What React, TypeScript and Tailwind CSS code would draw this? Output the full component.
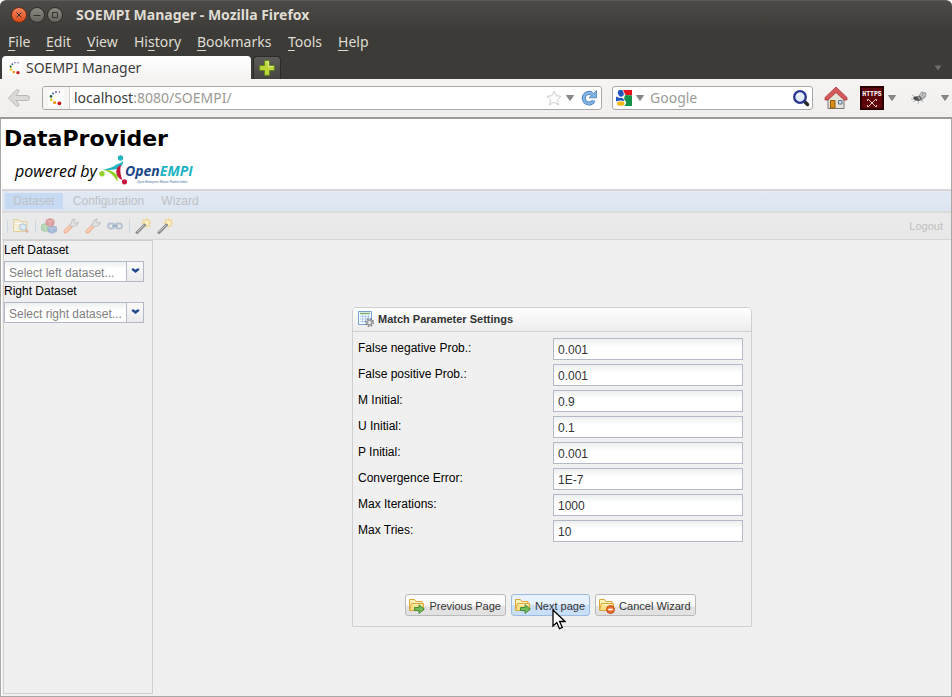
import { useId, useState } from "react";
import type { ReactNode } from "react";

const UI = "font-['Noto_Sans','Open_Sans',sans-serif]";

function Dots({ className }: { className?: string }) {
  return (
    <svg viewBox="0 0 16 16" className={className} aria-hidden="true">
      <rect width="16" height="16" fill="#fff" />
      <circle cx="11.5" cy="2" r=".8" fill="#7b3fa0" />
      <circle cx="8" cy="2" r=".9" fill="#5a4fa8" />
      <circle cx="5" cy="3.6" r="1" fill="#3458a8" />
      <circle cx="3" cy="6.4" r="1.3" fill="#26603a" />
      <circle cx="3.4" cy="9.8" r="1.4" fill="#e9c51c" />
      <circle cx="6.6" cy="12.6" r="1.6" fill="#e8921a" />
      <circle cx="11.4" cy="13.3" r="1.9" fill="#cc1518" />
    </svg>
  );
}

function Caret() {
  return (
    <svg viewBox="0 0 8 6" className="h-[6px] w-[8px] shrink-0" aria-hidden="true">
      <path d="M.5 .5h7L4 5.5z" fill="#8b8a87" stroke="#6d6c69" strokeWidth=".7" />
    </svg>
  );
}

function WindowButton({ label, close, children }: { label: string; close?: boolean; children: ReactNode }) {
  return (
    <button
      aria-label={label}
      className={
        close
          ? "h-4 w-4 rounded-full border border-[#6b2c14] bg-linear-to-b from-[#f4855a] to-[#dd4814]"
          : "h-4 w-4 rounded-full border border-[#2f2e2a] bg-linear-to-b from-[#8a8880] to-[#66645d]"
      }
    >
      <svg viewBox="0 0 14 14" className="h-[14px] w-[14px]" fill="none" stroke="#35322c" strokeWidth="1">
        {children}
      </svg>
    </button>
  );
}

function TitleBar() {
  return (
    <header className="flex h-[29px] items-center gap-[13px] rounded-t-md border-t border-[#5b5a56] bg-linear-to-b from-[#4b4a46] to-[#3d3c38] pl-[11px]">
      <div className="flex gap-[2px]">
        <WindowButton label="Close" close>
          <path d="M4.5 4.5l5 5M9.5 4.5l-5 5" />
        </WindowButton>
        <WindowButton label="Minimize">
          <path d="M3.5 7.500h7" />
        </WindowButton>
        <WindowButton label="Maximize">
          <path d="M4.500 4.500h5v5h-5z" />
        </WindowButton>
      </div>
      <h1 className="text-[14px] leading-5 font-bold text-[#dfdbd2]">SOEMPI Manager - Mozilla Firefox</h1>
    </header>
  );
}

const menus = [
  { name: "File", width: "w-[38px]" },
  { name: "Edit", width: "w-[41px]" },
  { name: "View", width: "w-[47px]" },
  { name: "History", width: "w-[63px]" },
  { name: "Bookmarks", width: "w-[91px]" },
  { name: "Tools", width: "w-[50px]" },
  { name: "Help", width: "w-[45px]" },
];

function MenuBar() {
  return (
    <nav className="flex h-[26px] items-center bg-[#3c3b37] pl-[8px]">
      {menus.map(({ name, width }) => {
        const at = name === "History" ? 2 : 0;
        return (
          <button key={name} className={"text-left text-[14px] leading-5 whitespace-nowrap text-[#dfdbd2] " + width}>
            {name.slice(0, at)}
            <span className="underline underline-offset-[3px]">{name[at]}</span>
            {name.slice(at + 1)}
          </button>
        );
      })}
    </nav>
  );
}

function TabStrip() {
  return (
    <div className="flex h-6 items-end bg-[#3c3b37] pl-[2px]">
      <button className="flex h-[23px] w-[249px] items-center gap-[4px] rounded-t-[4px] bg-linear-to-b from-white to-[#f4f3f2] pl-[6px] text-[14px] leading-5 text-[#3c3c3c]">
        <Dots className="h-[14px] w-[14px]" />
        SOEMPI Manager
      </button>
      <button aria-label="New tab" className="ml-[2px] flex h-[23px] w-[28px] items-center justify-center rounded-t-[4px] border border-b-0 border-[#2b2a27] bg-linear-to-b from-[#5d5c58] to-[#454440]">
        <svg viewBox="0 0 16 16" className="h-4 w-4">
          <path d="M5.5 .7h5v4.8h4.8v5h-4.8v4.8h-5v-4.8H.7v-5h4.8z" fill="#bed63a" stroke="#5f8a1b" />
          <path d="M6.5 1.8h3v4.7h4.7" fill="none" stroke="#e3ef93" />
        </svg>
      </button>
      <button aria-label="List all tabs" className="mr-[10px] mb-2 ml-auto flex">
        <svg viewBox="0 0 8 6" className="h-[6px] w-[8px]">
          <path d="M.5 .5h7L4 5.5z" fill="#6e6d69" />
        </svg>
      </button>
    </div>
  );
}

function NavBar() {
  const [url, setUrl] = useState("localhost:8080/SOEMPI/");
  const split = url.indexOf(":");
  return (
    <div className="flex h-10 items-center border-b-2 border-[#9c9a96] bg-linear-to-b from-[#f5f4f3] to-[#f0efee] pr-[3px] pl-[7px]">
      <button aria-label="Back" className="shrink-0">
        <svg viewBox="0 0 24 20" className="h-5 w-6">
          <path d="M1.500 10L9 2.300q1.500-1.300 2.500-.3t0 2.300L9 7.500h11q2.500 0 2.500 2.500T20 12.500H9l2.500 3.200q1 1.300 0 2.300T9 17.700z" fill="#dcdad8" stroke="#bbb9b6" />
        </svg>
      </button>
      <div className="ml-[11px] flex h-6 min-w-0 flex-1 items-center overflow-hidden rounded-[3px] border border-[#a9a7a3] bg-white">
        <span className="flex h-full w-[27px] shrink-0 items-center justify-center border-r border-[#d4d2cf] bg-[#f6f5f4]">
          <Dots className="h-4 w-4" />
        </span>
        <div className="relative ml-1 h-5 min-w-0 flex-1 text-[14px] leading-5">
          <div aria-hidden="true" className="absolute inset-0 whitespace-nowrap text-[#9b9994]">
            <span className="text-[#3c3c3c]">{split < 0 ? url : url.slice(0, split)}</span>
            {split < 0 ? "" : url.slice(split)}
          </div>
          <input
            aria-label="Address"
            value={url}
            onChange={(e) => setUrl(e.target.value)}
            className="relative block h-5 w-full bg-transparent text-transparent caret-black outline-none"
          />
        </div>
        <svg viewBox="0 0 16 16" className="h-4 w-4 shrink-0">
          <path d="M8 1l2.100 4.700 5 .6-3.700 3.500 1 5L8 12.300l-4.400 2.500 1-5L.9 6.300l5-.6z" fill="#fdfdfd" stroke="#c9c7c5" strokeWidth=".9" />
        </svg>
        <span className="ml-1 flex">
          <Caret />
        </span>
        <button aria-label="Reload" className="mr-1 ml-[7px] shrink-0">
          <svg viewBox="0 0 16 16" className="h-4 w-4" fill="none">
            <path d="M12.800 10.500A5.300 5.300 0 1 1 11 3.800" stroke="#4a7db5" strokeWidth="4" />
            <path d="M15.500 .5v7.300H8z" fill="#7fb0e2" stroke="#4a7db5" strokeWidth=".8" />
            <path d="M12.800 10.500A5.300 5.300 0 1 1 11.800 4.500" stroke="#82b2e4" strokeWidth="2.700" />
          </svg>
        </button>
      </div>
      <div className="ml-[10px] flex h-6 w-[201px] shrink-0 items-center rounded-[3px] border border-[#a9a7a3] bg-white pr-[2px] pl-[3px]">
        <svg viewBox="0 0 16 16" className="h-4 w-4 shrink-0">
          <rect width="16" height="16" fill="#fff" />
          <path d="M7 0h9v5.500L9.500 5z" fill="#e5131c" />
          <path d="M9.500 5l6.500.5V16H8.500q3-3.500.5-5.500-2-2.500.5-5.500z" fill="#14924a" />
          <ellipse cx="4.800" cy="3.200" rx="2.800" ry="3.600" transform="rotate(-20 4.800 3.200)" fill="#2456c0" />
          <path d="M0 6.500q3 1.500 6.500 1.500 2 1.500 1.500 3-4-1-8 .5z" fill="#2456c0" />
          <ellipse cx="4.700" cy="13.500" rx="3.800" ry="2.300" fill="#f5b916" />
        </svg>
        <span className="mx-1 flex">
          <Caret />
        </span>
        <input aria-label="Search" placeholder="Google" className="ml-[2px] h-5 min-w-0 flex-1 bg-transparent text-[14px] leading-5 outline-none placeholder:text-[#9d9b98]" />
        <svg viewBox="0 0 18 18" className="h-[18px] w-[18px] shrink-0" fill="none">
          <path d="M12.500 12.500l3 3" stroke="#2a2a2a" strokeWidth="3.500" strokeLinecap="round" />
          <circle cx="8" cy="8" r="5.800" fill="#e3ebf8" stroke="#29368f" strokeWidth="2.300" />
          <path d="M5 7q1-2 3-2" stroke="#fff" strokeWidth="1.500" />
        </svg>
      </div>
      <button aria-label="Home" className="ml-[11px] shrink-0">
        <svg viewBox="0 0 24 24" className="h-6 w-6">
          <path d="M4 12l8-8 8 8v10.500H4z" fill="#e6e4d8" stroke="#77756f" />
          <path d="M6.500 14.500H11V22H6.500z" fill="#d98f1c" stroke="#8f5a0a" />
          <path d="M14.500 14.500h3.500v3.500h-3.500z" fill="#d2e2f0" stroke="#55718d" />
          <path d="M12 1L1 11.500V14h3l8-7.500 8 7.500h3v-2.500z" fill="#d5585a" stroke="#a8383b" strokeWidth=".8" />
        </svg>
      </button>
      <button aria-label="HTTPS" className="ml-[12px] flex shrink-0 items-center gap-1">
        <svg viewBox="0 0 24 24" className="h-6 w-6">
          <rect width="24" height="24" fill="#5c0408" />
          <rect x="1" y="1" width="22" height="22" fill="none" stroke="#2c0002" strokeWidth="2" />
          <text x="12" y="9.500" fontSize="6.500" fontWeight="700" textAnchor="middle" fill="#fff" fontFamily="Liberation Mono, monospace">HTTPS</text>
          <path d="M8.500 13.500l7 7M15.500 13.500l-7 7M7.500 15v-1.500H9M15 13.500h1.500V15M16.500 19v1.500H15M9 20.500H7.500V19" stroke="#e8c9cb" fill="none" />
        </svg>
        <Caret />
      </button>
      <button aria-label="Firebug" className="ml-[14px] flex shrink-0 items-center gap-[13px]">
        <svg viewBox="0 0 18 16" className="h-4 w-[18px]" fill="none">
          <path d="M2 5l4 3M3 12l4-3M8 14l1-4M1 9h4M13 12l-2-3" stroke="#b5b5b5" />
          <path d="M8 7l3.500-5 4.500 1-.5 4-4.500 3.500z" fill="#a9a9a9" stroke="#898989" strokeWidth=".6" />
          <path d="M9 8l3-5M10 9l5-5" stroke="#eee" strokeWidth=".7" />
          <ellipse cx="8" cy="8.500" rx="3.500" ry="2.500" fill="#5c5c5c" />
          <circle cx="5" cy="8" r="1.600" fill="#444" />
          <path d="M8 6.500l2 3" stroke="#ccc" />
        </svg>
        <Caret />
      </button>
    </div>
  );
}

function OpenEmpiLogo() {
  return (
    <svg viewBox="0 0 94 30" className="h-[30px] w-[94px]" role="img" aria-label="OpenEMPI">
      <circle cx="21.500" cy="3" r="2.700" fill="#22b4c0" />
      <path d="M24.300 6Q23.500 17 3 14.500 13 13.500 17.500 9.500 21.500 8.500 24.300 6z" fill="#22b4c0" />
      <circle cx="3" cy="18.800" r="2.700" fill="#93d22d" />
      <path d="M4 14.800q9-.8 14.500 5.700v6.300Q13 17 4 14.800z" fill="#93d22d" />
      <circle cx="25.500" cy="26.800" r="2.600" fill="#c3183c" />
      <path d="M22 9.500q-2 8 1.500 15.500-6-2-6.300-8.500.3-4.500 4.800-7z" fill="#c3183c" />
      <text x="26" y="21" fontFamily="Open Sans, sans-serif" fontSize="14" fontWeight="700" fontStyle="italic" fill="#1b4686">
        Open<tspan fill="#20b4c2">EMPI</tspan>
      </text>
      <text x="38" y="28" fontFamily="Liberation Sans, sans-serif" fontSize="3" fill="#3a6c9c">Open Enterprise Master Patient Index</text>
    </svg>
  );
}

function PageHeader() {
  return (
    <div className="h-[70px] bg-white pl-[2px]">
      <h2 className="pt-[6px] font-['DejaVu_Sans',sans-serif] text-[22px] leading-7 font-bold text-black">DataProvider</h2>
      <div className="flex items-end pt-[2px] pl-[11px] font-['Open_Sans',sans-serif] text-[16px] leading-7 text-black italic">
        <span className="mr-[2px]">powered by</span>
        <OpenEmpiLogo />
      </div>
    </div>
  );
}

function AppMenu() {
  return (
    <nav className="flex h-6 items-center border-t-2 border-b-2 border-t-[#d6d6d6] border-b-[#dcdcdc] bg-linear-to-b from-[#e2e9f3] to-[#dbe5f1] pl-[3px] font-['Liberation_Sans',Arial,sans-serif] text-[12px] leading-4 text-[#c0c1c4]">
      <button className="h-4 w-[58px] bg-[#c6dbf3]">Dataset</button>
      <button className="ml-[8px] w-[75px]">Configuration</button>
      <button className="ml-[15px] w-[38px]">Wizard</button>
    </nav>
  );
}

function Wrench() {
  return (
    <svg viewBox="0 0 16 16" className="h-4 w-4" fill="none">
      <path d="M2.500 13.500l6-6" stroke="#f0b193" strokeWidth="4" strokeLinecap="round" />
      <path d="M2.500 13.300l5.500-5.500" stroke="#f8d0bc" strokeWidth="2" strokeLinecap="round" />
      <path d="M8 5.500Q8 1.500 12 .8L10.800 3.500l1.700 1.700 2.700-1.200q0 4-4.700 4.200L9 9 6.500 7z" fill="#e1e1e1" stroke="#b9bcc0" strokeWidth=".9" />
    </svg>
  );
}

function Wand() {
  return (
    <svg viewBox="0 0 16 16" className="h-4 w-4" fill="none">
      <path d="M11.500 0v10M6.500 5H16M8 1.500l7 7M15 1.500l-7 7" stroke="#f1d58a" strokeWidth="1.600" />
      <circle cx="11.500" cy="5" r="2.200" fill="#fff3c4" />
      <path d="M2 14.500l7.500-7.500" stroke="#8e8e8e" strokeWidth="3" strokeLinecap="round" />
      <path d="M2 14l7-7" stroke="#cacaca" />
    </svg>
  );
}

function Divider() {
  return <span className="h-[13px] w-px bg-[#ccd8e6]" />;
}

function AppToolbar() {
  return (
    <div className="flex h-[27px] items-center border-b border-[#d5d5d5] bg-linear-to-b from-[#eaeaea] to-[#e8e8e8] pr-[8px] pl-[5px]">
      <Divider />
      <button aria-label="Browse datasets" className="ml-[5px] opacity-80">
        <svg viewBox="0 0 16 16" className="h-4 w-4" fill="none">
          <path d="M.5 1.500h5l1.500 2h7v10H.5z" fill="#f6ecca" stroke="#e1cb8f" />
          <path d="M2 5.500h11M3 7.500v5" stroke="#fff" />
          <circle cx="10" cy="9" r="3.200" fill="#dcecf8" stroke="#a9c3dc" strokeWidth="1.200" />
          <path d="M12.500 11.500l2.500 3" stroke="#dca685" strokeWidth="2" />
        </svg>
      </button>
      <span className="ml-[6px] flex">
        <Divider />
      </span>
      <div className="ml-[5px] flex gap-[6px]">
        <button aria-label="Blocking" className="opacity-80">
          <svg viewBox="0 0 16 16" className="h-4 w-4" strokeWidth=".6">
            <path d="M.5 7L3.500 5.500 8 7v5l-4 2-3.500-2z" fill="#a2cda2" stroke="#86b888" />
            <path d="M.5 7L4 8.500 8 7M4 8.500V14" fill="none" stroke="#d5ead5" />
            <path d="M7 9l4-1.500 4.500 1.500v4.500L11 15.500l-4-2z" fill="#93aed2" stroke="#7c99c2" />
            <path d="M7 9l4 2 4.500-2M11 11v4.500" fill="none" stroke="#cbdaec" />
            <path d="M5 2l4-1.500L13 2v4.500L9 8.500l-4-2z" fill="#e08c8c" stroke="#cb7676" />
            <path d="M5 2l4 1.500L13 2M9 3.500v5" fill="none" stroke="#f2c8c8" />
          </svg>
        </button>
        <button aria-label="Matching settings">
          <Wrench />
        </button>
        <button aria-label="Field settings">
          <Wrench />
        </button>
        <button aria-label="Link records">
          <svg viewBox="0 0 16 16" className="h-4 w-4" fill="none" strokeWidth="1.800">
            <rect x="1" y="5.500" width="6.500" height="5" rx="2.500" stroke="#b7c2d2" />
            <rect x="8.500" y="5.500" width="6.500" height="5" rx="2.500" stroke="#b7c2d2" />
            <path d="M5 8h6" stroke="#a3b2c6" />
          </svg>
        </button>
      </div>
      <span className="ml-[6px] flex">
        <Divider />
      </span>
      <div className="ml-[5px] flex gap-[6px]">
        <button aria-label="Wizard">
          <Wand />
        </button>
        <button aria-label="Matching wizard">
          <Wand />
        </button>
      </div>
      <button className="ml-auto font-['Liberation_Sans',Arial,sans-serif] text-[11px] leading-4 text-[#bfbfc1]">Logout</button>
    </div>
  );
}

function DatasetSelect({ label, hint }: { label: string; hint: string }) {
  const id = useId();
  return (
    <div>
      <label htmlFor={id} className="block h-5 text-[12px] leading-[18px] text-black">
        {label}
      </label>
      <div className="relative h-[21px] w-[140px]">
        <select id={id} className="block h-full w-full appearance-none border border-[#b5b8c8] bg-white bg-linear-to-b from-[#edf1f0] to-white to-40% pt-[2px] pl-[4px] text-[12px] leading-4 text-[#808080] outline-none">
          <option>{hint}</option>
        </select>
        <span className="pointer-events-none absolute inset-y-px right-px flex w-[17px] justify-center border-l border-[#b5b8c8] bg-linear-to-b from-[#fafafa] to-[#ebebeb] pt-[6px]">
          <svg viewBox="0 0 10 6" className="h-[5px] w-[9px]">
            <path d="M.5 .5h2.500L5 2.200 7 .5h2.500v1.800L5 6 .5 2.300z" fill="#24488f" />
          </svg>
        </span>
      </div>
    </div>
  );
}

function Sidebar() {
  return (
    <aside className="w-[150px] shrink-0 border border-[#d0d0d0]">
      <div className="flex flex-col">
        <DatasetSelect label="Left Dataset" hint="Select left dataset..." />
        <DatasetSelect label="Right Dataset" hint="Select right dataset..." />
      </div>
    </aside>
  );
}

function Field({ label, initial }: { label: string; initial: string }) {
  const id = useId();
  return (
    <div className="flex h-[22px] items-start">
      <label htmlFor={id} className="w-[195px] pt-[2px] text-[12px] leading-4 text-black">
        {label}
      </label>
      <input
        id={id}
        defaultValue={initial}
        className="h-[22px] min-w-0 flex-1 border border-[#b5b8c8] bg-white bg-linear-to-b from-[#ecf0ef] to-white to-40% px-1 pt-[2px] text-[12px] leading-4 text-[#333] outline-none"
      />
    </div>
  );
}

function FolderIcon({ cancel }: { cancel?: boolean }) {
  return (
    <svg viewBox="0 0 16 16" className="h-4 w-4 shrink-0">
      <path d="M.5 12V1.500h5l1.500 2h6V6" fill="#fdf1b6" stroke="#d9a63c" />
      <path d="M.5 12.500L2.500 5.500h12v7z" fill="#f9df83" stroke="#d9a63c" />
      <path d="M3.500 6.800h9.500" stroke="#fff6cf" />
      {cancel ? (
        <>
          <circle cx="11.500" cy="11.500" r="4" fill="#e66b28" stroke="#b84711" strokeWidth=".8" />
          <path d="M9.200 11.500h4.600" stroke="#fff" strokeWidth="1.600" />
        </>
      ) : (
        <path d="M5.500 9.500h4.500V6.700l5.300 4.400L10 15.500v-2.900H5.500z" fill="#72bd58" stroke="#3a8433" strokeWidth=".9" />
      )}
    </svg>
  );
}

function WizardButton({ children, cancel, active }: { children: ReactNode; cancel?: boolean; active?: boolean }) {
  return (
    <button
      className={
        "flex h-[22px] items-center gap-[4px] rounded-[3px] border pt-[2px] pr-[4px] pl-[3px] text-[11px] leading-4 whitespace-nowrap text-[#333] " +
        (active
          ? "border-[#9ebae1] bg-linear-to-b from-[#e6f2ff] from-50% to-[#c9dff8] to-50%"
          : "border-[#b9b9b9] bg-linear-to-b from-[#fcfcfc] from-50% to-[#e2e2e2] to-60%")
      }
    >
      <FolderIcon cancel={cancel} />
      {children}
    </button>
  );
}

const fields = [
  ["False negative Prob.:", "0.001"],
  ["False positive Prob.:", "0.001"],
  ["M Initial:", "0.9"],
  ["U Initial:", "0.1"],
  ["P Initial:", "0.001"],
  ["Convergence Error:", "1E-7"],
  ["Max Iterations:", "1000"],
  ["Max Tries:", "10"],
];

function SettingsPanel() {
  return (
    <section className="flex h-80 w-[400px] flex-col rounded-t-[5px] border border-[#d0d0d0]">
      <h3 className="flex h-6 shrink-0 items-center gap-1 rounded-t-[4px] border-b border-[#d0d0d0] bg-linear-to-b from-white to-[#ececec] pb-px pl-[5px] text-[11px] leading-4 font-bold text-[#333]">
        <svg viewBox="0 0 16 16" className="h-4 w-4" fill="none">
          <path d="M.5 .5h13v13H.5z" fill="#f5faff" stroke="#77a1d3" />
          <path d="M2 2.500h10" stroke="#78b36c" strokeWidth="1.500" />
          <path d="M2 5.500h10M2 8h10M2 10.500h10M4.500 4v8M7.500 4v8M10.500 4v8" stroke="#a9c6e8" strokeWidth=".8" />
          <circle cx="11.500" cy="11.500" r="3.700" stroke="#7b7f85" strokeWidth="1.800" strokeDasharray="1.500 1.400" />
          <circle cx="11.500" cy="11.500" r="2.300" fill="#eee" stroke="#9b9ea3" strokeWidth="1.600" />
        </svg>
        Match Parameter Settings
      </h3>
      <form className="flex flex-1 flex-col justify-between pt-[6px] pr-[8px] pb-[10px] pl-[5px]" onSubmit={(e) => e.preventDefault()}>
        <div className="flex flex-col gap-1">
          {fields.map(([label, value]) => (
            <Field key={label} label={label} initial={value} />
          ))}
        </div>
        <div className="flex justify-center gap-[5px]">
          <WizardButton>Previous Page</WizardButton>
          <div className="relative">
            <WizardButton active>Next page</WizardButton>
            <svg viewBox="0 0 14 21" className="pointer-events-none absolute top-[15px] left-[41px] h-[21px] w-[14px]" aria-hidden="true">
              <path d="M1 1v16l3.800-3.500 2.700 6.200 2.800-1.200-2.700-6H13z" fill="#fff" stroke="#000" strokeWidth="1.300" />
            </svg>
          </div>
          <WizardButton cancel>Cancel Wizard</WizardButton>
        </div>
      </form>
    </section>
  );
}

export default function App() {
  return (
    <div className={"flex min-h-screen flex-col bg-white " + UI}>
      <TitleBar />
      <MenuBar />
      <TabStrip />
      <NavBar />
      <div className="flex flex-1 flex-col border-x border-b border-[#aaa8a5] bg-[#f0f0f0]">
        <div className="flex flex-1 flex-col border-l border-white">
          <PageHeader />
          <AppMenu />
          <AppToolbar />
          <div className="flex flex-1 pb-[2px] pl-px font-['Liberation_Sans',Arial,sans-serif]">
            <Sidebar />
            <main className="flex flex-1 items-center justify-center">
              <SettingsPanel />
            </main>
          </div>
        </div>
      </div>
    </div>
  );
}
